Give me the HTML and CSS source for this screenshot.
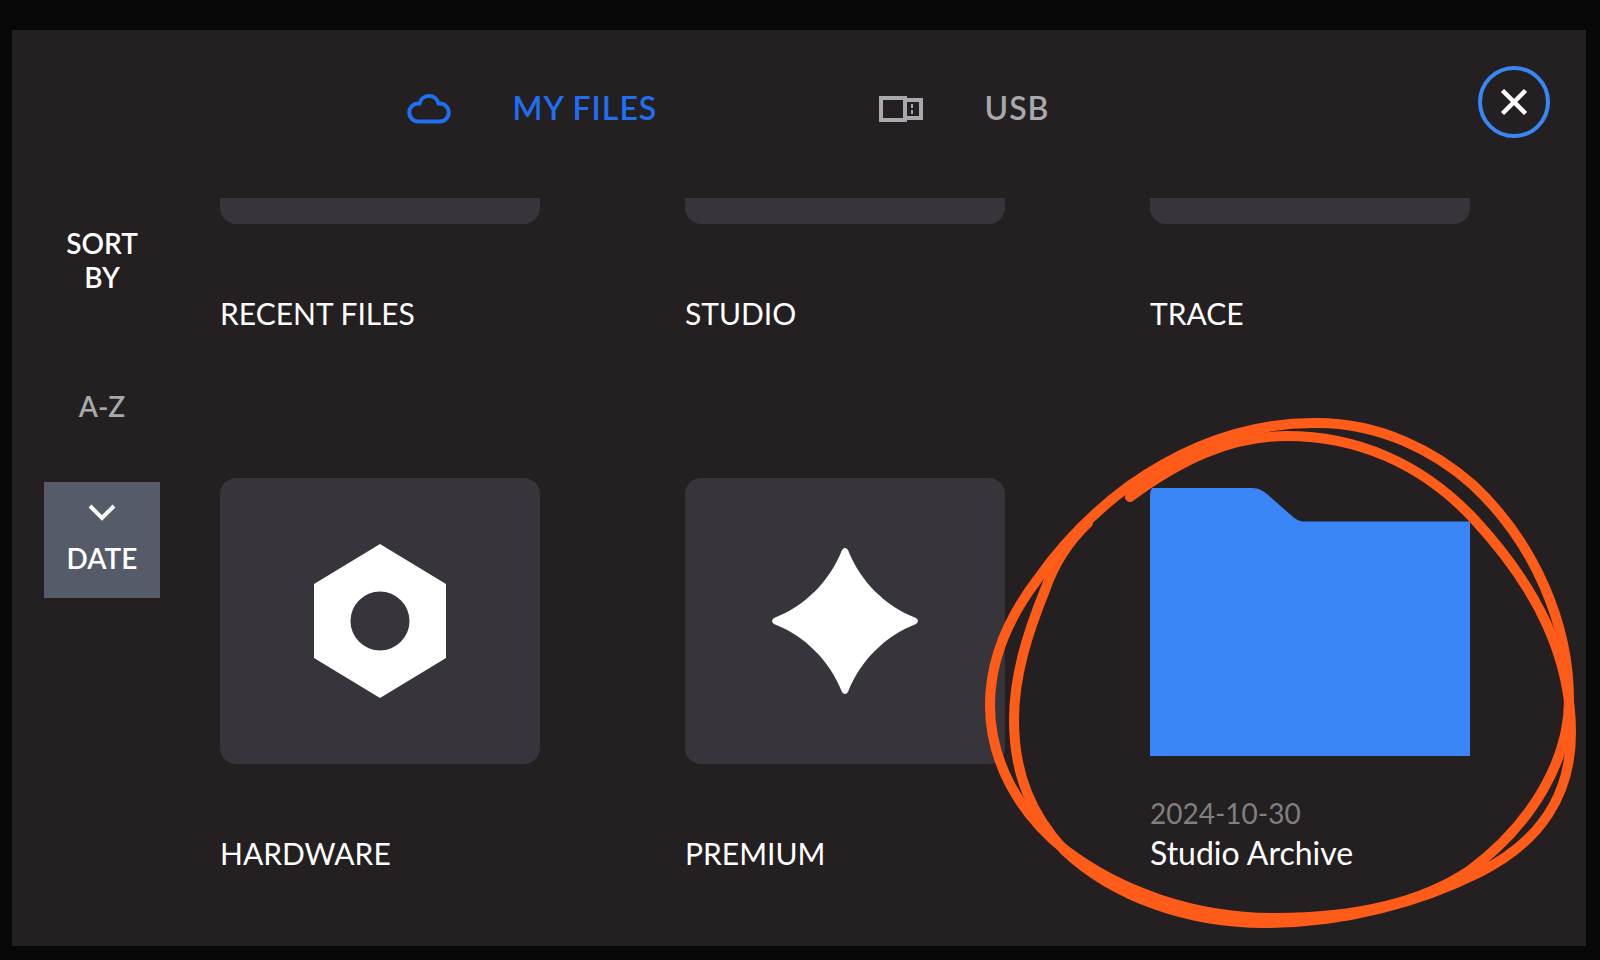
FILE: index.html
```
<!DOCTYPE html>
<html lang="en">
<head>
<meta charset="utf-8">
<title>My Files</title>
<link rel="stylesheet" href="styles.css">
</head>
<body>
<div class="panel">
  <header class="topbar">
    <nav class="tabs" aria-label="File source">
      <button class="tab tab-active" type="button">
        <svg class="tab-icon" viewBox="0 -1 44 32" aria-hidden="true"><path d="M11.250 28.500A9 9 0 0 1 11.250 10.500H12.500C13.500 6 17.500 3 22 3C26.500 3 30.500 6 31.500 10.500H32.750A9 9 0 0 1 32.750 28.500Z" fill="none" stroke="currentColor" stroke-width="4"/></svg>
        <span>MY FILES</span>
      </button>
      <button class="tab" type="button">
        <svg class="tab-icon" viewBox="0 -1 44 32" aria-hidden="true"><path d="M2 5H26V27H2ZM27 7H42V25H27" fill="none" stroke="currentColor" stroke-width="4"/><path d="M32 11h2v4h-2zM32 17h2v4h-2z" fill="currentColor"/></svg>
        <span>USB</span>
      </button>
    </nav>
    <button class="close" type="button" aria-label="Close">
      <svg class="close-icon" viewBox="0 0 28 28" aria-hidden="true"><path d="M2.500 2.500L25.500 25.500M25.500 2.500L2.500 25.500" stroke="currentColor" stroke-width="4.500"/></svg>
    </button>
  </header>
  <div class="content">
    <aside class="sort">
      <h2 class="sort-title">SORT<br>BY</h2>
      <button class="sort-option" type="button">A-Z</button>
      <button class="sort-option sort-active" type="button">
        <svg class="chevron" viewBox="0 0 28 18" aria-hidden="true"><path d="M2 2L14 14L26 2" fill="none" stroke="currentColor" stroke-width="4"/></svg>
        DATE
      </button>
    </aside>
    <main class="scroller">
      <div class="grid">
        <a class="item" href="#"><span class="thumb"></span><span class="caption">RECENT FILES</span></a>
        <a class="item" href="#"><span class="thumb"></span><span class="caption">STUDIO</span></a>
        <a class="item" href="#"><span class="thumb"></span><span class="caption">TRACE</span></a>
        <a class="item" href="#">
          <span class="thumb"><svg class="nut" viewBox="0 0 132 154" aria-hidden="true"><path fill-rule="evenodd" d="M66 0L132 40V114L66 154L0 114V40ZM66 47.500A29.500 29.500 0 1 0 66 106.500A29.500 29.500 0 1 0 66 47.500Z" fill="currentColor"/></svg></span>
          <span class="caption">HARDWARE</span>
        </a>
        <a class="item" href="#">
          <span class="thumb"><svg class="star" viewBox="0 0 146 146" aria-hidden="true"><path d="M70 2Q73 -2 76 2C88 33 113 58 144 70Q148 73 144 76C113 88 88 113 76 144Q73 148 70 144C58 113 33 88 2 76Q-2 73 2 70C33 58 58 33 70 2Z" fill="currentColor"/></svg></span>
          <span class="caption">PREMIUM</span>
        </a>
        <a class="item" href="#">
          <span class="thumb thumb-folder"><svg class="folder" viewBox="0 0 320 268" preserveAspectRatio="none" aria-hidden="true"><path d="M0 268V8Q0 3 2 0H102C109 0 113 3 117 6L142 28C147 32 149 33.500 155 33.500H320V268Z" fill="currentColor"/></svg></span>
          <span class="caption caption-folder"><time class="date" datetime="2024-10-30">2024-10-30</time>Studio Archive</span>
          <svg class="highlight" viewBox="980 410 600 530" aria-hidden="true">
            <path d="M1314 423C1380 422 1436 452 1473 485C1535 543 1569 625 1569 700C1569 758 1534 823 1469 871C1415 907 1345 918 1275 918C1195 918 1120 892 1064 849C1018 812 990 760 990 705C990 660 1009 617 1037 580C1063 543 1095 511 1129 486C1190 443 1250 423 1314 423Z"/>
            <path d="M1088 523C1067 543 1053 567 1045 590C1028 632 1014 675 1014 720C1014 775 1032 815 1064 850C1115 898 1190 923 1265 923C1345 923 1420 902 1480 872C1540 842 1571 795 1571 733C1571 660 1540 590 1473 518C1420 462 1355 436 1287 436C1230 436 1180 460 1130 497"/>
          </svg>
        </a>
      </div>
    </main>
  </div>
</div>
</body>
</html>
```
FILE: styles.css
```
* { box-sizing: border-box; }

body {
  margin: 0;
  height: 100vh;
  padding: 30px 14px 14px 12px;
  background: #080808;
  color: #fff;
  font-family: Lato, "Open Sans", sans-serif;
  font-size: 32px;
  line-height: 40px;
}

button {
  padding: 0;
  border: 0;
  background: none;
  color: inherit;
  font: inherit;
  cursor: pointer;
}

svg { display: block; }

.panel {
  display: flex;
  flex-direction: column;
  height: 100%;
  background: #241f21;
}

.topbar {
  display: flex;
  align-items: flex-start;
  flex: none;
  height: 168px;
  padding: 36px 36px 0 0;
}

.tabs {
  display: flex;
  flex: 1;
  padding-left: calc(25% + 10px);
}

.tab {
  display: flex;
  align-items: center;
  gap: 62px;
  flex: 0 0 472px;
  height: 84px;
  color: #a7a9ac;
  font-weight: 600;
  letter-spacing: 1px;
}

.tab-active { color: #1f6ff0; }

.tab-icon { width: 44px; height: 32px; }

.close {
  display: grid;
  place-items: center;
  width: 72px;
  height: 72px;
  border: 4px solid #3b86f7;
  border-radius: 50%;
}

.close-icon { width: 28px; height: 28px; }

.content {
  display: flex;
  flex: 1;
  min-height: 0;
}

.sort {
  display: flex;
  flex-direction: column;
  flex: none;
  gap: 36px;
  width: 208px;
  padding: 28px 60px 0 32px;
  font-size: 28px;
  font-weight: 600;
  line-height: 34px;
  text-align: center;
}

.sort-title {
  margin: 0;
  font: inherit;
}

.sort-option {
  display: flex;
  flex-direction: column;
  align-items: center;
  justify-content: flex-end;
  gap: 19px;
  height: 116px;
  padding-bottom: 23px;
  color: #a7a9ac;
}

.sort-active {
  background: #555b69;
  color: #fff;
}

.chevron { width: 28px; height: 18px; }

.scroller {
  display: flex;
  flex-direction: column;
  justify-content: flex-end;
  flex: 1;
  min-width: 0;
  overflow: hidden;
}

.grid {
  display: grid;
  grid-template-columns: repeat(3, 1fr);
  gap: 145px;
  padding: 0 116px 73px 0;
}

.item {
  position: relative;
  display: flex;
  flex-direction: column;
  gap: 29px;
  color: inherit;
  text-decoration: none;
}

.thumb {
  display: grid;
  place-items: center;
  height: 286px;
  border-radius: 16px;
  background: #37353b;
}

.thumb-folder {
  padding-top: 2px;
  background: none;
  border-radius: 0;
  color: #3b86f7;
}

.nut { width: 132px; height: 154px; }
.star { width: 146px; height: 146px; }

.folder {
  width: 100%;
  height: 268px;
}

.caption {
  display: flex;
  flex-direction: column;
  justify-content: flex-end;
  height: 80px;
  font-size: 30px;
}

.caption-folder { font-size: 32px; }

.date {
  color: #808080;
  font-size: 28px;
}

.highlight {
  position: absolute;
  top: -68px;
  left: -170px;
  width: 600px;
  height: 530px;
  fill: none;
  stroke: #ff5c1a;
  stroke-width: 10px;
  stroke-linecap: round;
  pointer-events: none;
}
```
